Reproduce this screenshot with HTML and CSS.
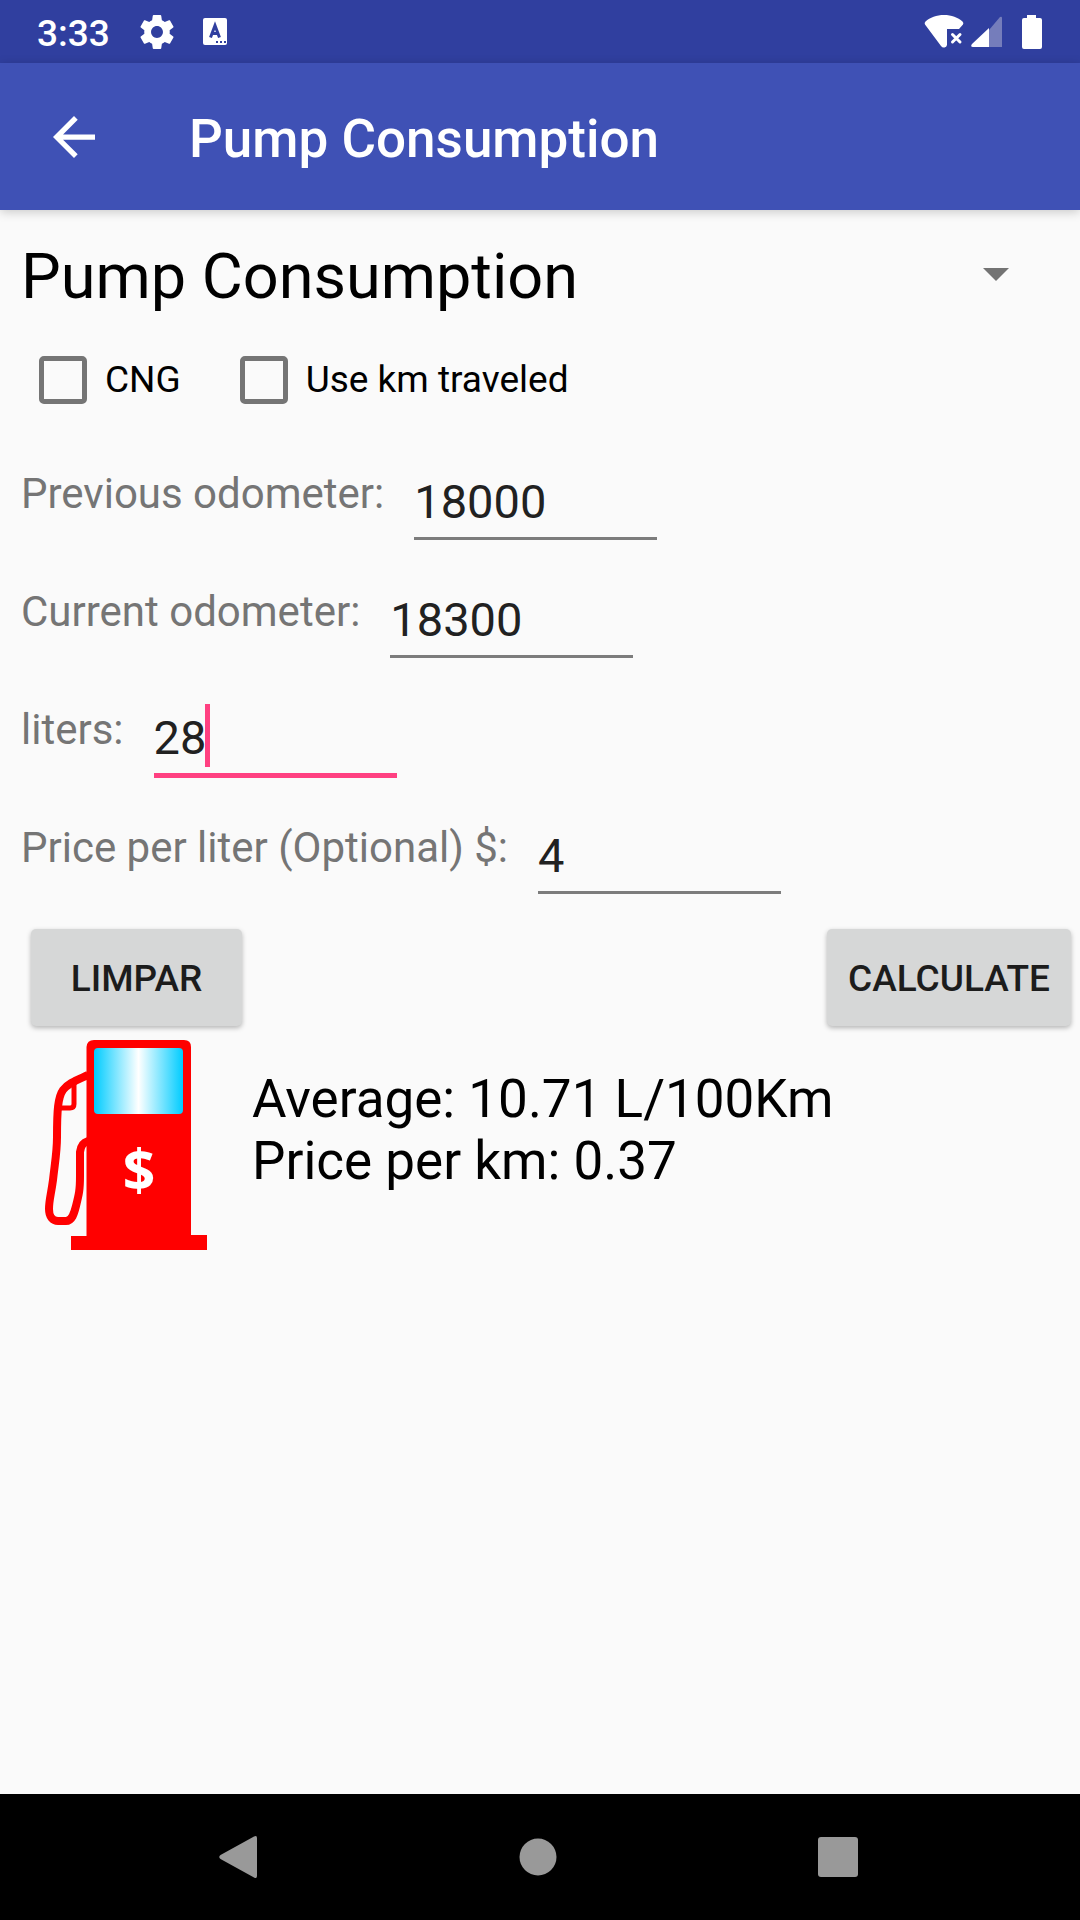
FILE: index.html
```html
<!DOCTYPE html>
<html lang="en">
<head>
<meta charset="utf-8">
<meta name="viewport" content="width=device-width, initial-scale=1">
<title>Pump Consumption</title>
<link rel="stylesheet" href="styles.css">
</head>
<body>
<div class="screen">
  <div class="status-bar">
    <span class="clock">3:33</span>
    <svg class="status-gear" width="34" height="34" viewBox="2 2 20 20" aria-hidden="true"><path fill="#fff" d="M19.43 12.98c.04-.32.07-.64.07-.98s-.03-.66-.07-.98l2.11-1.65c.19-.15.24-.42.12-.64l-2-3.46c-.12-.22-.39-.3-.61-.22l-2.49 1c-.52-.4-1.08-.73-1.69-.98l-.38-2.65C14.46 2.18 14.25 2 14 2h-4c-.25 0-.46.18-.49.42l-.38 2.65c-.61.25-1.17.59-1.69.98l-2.49-1c-.23-.09-.49 0-.61.22l-2 3.46c-.13.22-.07.49.12.64l2.11 1.65c-.04.32-.07.65-.07.98s.03.66.07.98l-2.11 1.65c-.19.15-.24.42-.12.64l2 3.46c.12.22.39.3.61.22l2.49-1c.52.4 1.08.73 1.69.98l.38 2.65c.03.24.24.42.49.42h4c.25 0 .46-.18.49-.42l.38-2.65c.61-.25 1.17-.59 1.69-.98l2.49 1c.23.09.49 0 .61-.22l2-3.46c.12-.22.07-.49-.12-.64l-2.11-1.65zM12 15.5c-1.93 0-3.5-1.57-3.5-3.5s1.57-3.5 3.5-3.5 3.5 1.57 3.5 3.5-1.57 3.5-3.5 3.5z"/></svg>
    <svg width="24" height="27" viewBox="0 0 24 27" aria-hidden="true"><rect width="24" height="27" rx="2" fill="#fff"/><path d="M7.500 19.500L12 7.500L16.500 19.500M9 15.500H15" fill="none" stroke="#303f9f" stroke-width="3"/><path d="M13 23h2v2h-2zM17 23h2v2h-2zM21 23h2v2h-2z" fill="#303f9f"/></svg>
    <div class="status-right">
      <svg width="40" height="33" viewBox="0 0 40 33" aria-hidden="true"><path fill="#fff" d="M1.500 6.500C6 2.500 12.500 0 20 0S34 2.500 38.500 6.500Q40 8 39 9.500L35 14H23V30Q22.500 32 20.500 32.500Q18.500 33 17 31L1 9.500Q0 8 1.500 6.500Z"/><path d="M28.500 19.500L36 27M36 19.500L28.500 27" stroke="#fff" stroke-width="3" stroke-linecap="round"/></svg>
      <svg class="signal" width="32" height="32" viewBox="0 0 32 32" aria-hidden="true"><path fill="#757dbb" d="M18 14L29 1Q31 0 31 2V31H18Z"/><path fill="#fff" d="M18 12V31H2Q-1 31 1 28Z"/></svg>
      <svg width="20" height="34" viewBox="0 0 20 34" aria-hidden="true"><path fill="#fff" d="M5 0H14V3H18Q20 3 20 5V32Q20 34 18 34H2Q0 34 0 32V5Q0 3 2 3H5Z"/></svg>
    </div>
  </div>

  <header class="app-bar">
    <button class="back" type="button" aria-label="Back"><svg width="42" height="42" viewBox="4 4 16 16" aria-hidden="true"><path fill="#fff" d="M20 11H7.830l5.590-5.590L12 4l-8 8 8 8 1.410-1.410L7.830 13H20v-2z"/></svg></button>
    <h1 class="app-title">Pump Consumption</h1>
  </header>

  <main class="content">
    <div class="spinner">
      <select class="spinner-select" aria-label="Calculation"><option>Pump Consumption</option></select>
      <svg class="spinner-arrow" width="26" height="13" viewBox="0 0 26 13" aria-hidden="true"><path fill="#737373" d="M0 0H26L13 13Z"/></svg>
    </div>

    <div class="checks">
      <label class="check"><input class="check-box" type="checkbox">CNG</label>
      <label class="check"><input class="check-box" type="checkbox">Use km traveled</label>
    </div>

    <div class="row">
      <label class="row-label" for="previous">Previous odometer:</label>
      <input class="field" id="previous" type="text" inputmode="numeric" value="18000">
    </div>
    <div class="row">
      <label class="row-label" for="current">Current odometer:</label>
      <input class="field" id="current" type="text" inputmode="numeric" value="18300">
    </div>
    <div class="row">
      <label class="row-label" for="liters">liters:</label>
      <div class="field-active">
        <input class="field" id="liters" type="text" inputmode="decimal" value="28">
        <span class="caret"></span>
      </div>
    </div>
    <div class="row">
      <label class="row-label" for="price">Price per liter (Optional) $:</label>
      <input class="field" id="price" type="text" inputmode="decimal" value="4">
    </div>

    <div class="actions">
      <button class="button" type="button">LIMPAR</button>
      <button class="button" type="button">CALCULATE</button>
    </div>

    <div class="result">
      <svg class="pump" width="162" height="210" viewBox="0 0 162 210" aria-hidden="true">
        <defs><linearGradient id="glass"><stop offset="0" stop-color="#00ccff"/><stop offset=".5" stop-color="#fff"/><stop offset="1" stop-color="#00ccff"/></linearGradient></defs>
        <path fill="#f00" d="M41.500 7Q42 0 49 0H139Q146 0 146 7V195H162V210H26V196H41.500Z"/>
        <rect x="49" y="8" width="89" height="66" rx="4" fill="url(#glass)"/>
        <path fill="none" stroke="#f00" stroke-width="8" d="M43 35C32 40 23 43 18 50C13 57 12 70 12 97C12 112 10 122 8 140C6 155 4 160 4 169C4 177 8 181 13 181H21C27 181 29 174 31 166C34 154 35 150 35 136V112Q36 103 43 101"/>
        <path fill="none" stroke="#f00" stroke-width="5" d="M29 44V64Q29 68 25 68H14"/>
        <text class="pump-sign" x="94" y="151" text-anchor="middle">$</text>
      </svg>
      <p class="result-text">Average: 10.71 L/100Km<br>Price per km: 0.37</p>
    </div>
  </main>

  <nav class="nav-bar">
    <button class="nav-button" type="button" aria-label="Back"><svg width="38" height="42" viewBox="0 0 38 42" aria-hidden="true"><path fill="#999" d="M35 .5Q38-1 38 2V40Q38 43 35 41.500L1.500 23Q-1 21 1.500 19Z"/></svg></button>
    <button class="nav-button" type="button" aria-label="Home"><svg width="38" height="38" viewBox="0 0 38 38" aria-hidden="true"><circle cx="19" cy="19" r="18.500" fill="#999"/></svg></button>
    <button class="nav-button" type="button" aria-label="Recent apps"><svg width="40" height="40" viewBox="0 0 40 40" aria-hidden="true"><rect width="40" height="40" rx="3" fill="#999"/></svg></button>
  </nav>
</div>
</body>
</html>
```
FILE: styles.css
```css
* {
  box-sizing: border-box;
}

body {
  margin: 0;
  background: #fafafa;
  color: #000;
  font-family: Roboto, "Liberation Sans", sans-serif;
}

button,
input,
select {
  margin: 0;
  padding: 0;
  border: 0;
  border-radius: 0;
  outline: 0;
  background: none;
  color: inherit;
  font-family: inherit;
  appearance: none;
}

svg {
  display: block;
  flex: none;
}

.screen {
  display: flex;
  flex-direction: column;
  min-height: 100vh;
}

.status-bar {
  display: flex;
  align-items: center;
  height: 63px;
  padding: 0 38px 0 37px;
  background: #303f9f;
  color: #fff;
}

.clock {
  font-size: 37px;
  font-weight: 500;
  line-height: 44px;
  padding-top: 4px;
}

.status-gear {
  margin: 0 29px 0 30px;
}

.status-right {
  display: flex;
  align-items: center;
  margin-left: auto;
}

.signal {
  margin: 0 19px 0 7px;
}

.app-bar {
  display: flex;
  align-items: center;
  height: 147px;
  padding-left: 53px;
  background: #3f51b5;
  box-shadow: 0 2px 10px rgba(0, 0, 0, 0.2);
  color: #fff;
}

.back {
  margin-right: 94px;
}

.app-title {
  margin: 0;
  padding-top: 4px;
  font-size: 53px;
  font-weight: 500;
  line-height: 62px;
}

.content {
  flex: 1;
}

.spinner {
  position: relative;
  height: 130px;
}

.spinner-select {
  width: 100%;
  height: 132px;
  padding: 0 96px 0 21px;
  font-size: 63px;
}

.spinner-arrow {
  position: absolute;
  top: 58px;
  right: 71px;
  pointer-events: none;
}

.checks {
  display: flex;
  gap: 59px;
  height: 79px;
  padding-left: 39px;
}

.check {
  display: flex;
  align-items: center;
  gap: 18px;
  font-size: 37px;
}

.check-box {
  width: 48px;
  height: 48px;
  border: 5px solid #757575;
  border-radius: 5px;
}

.checks + .row {
  margin-top: 14px;
}

.row {
  display: flex;
  align-items: flex-start;
  gap: 30px;
  height: 118px;
  padding: 32px 21px 0;
}

.row-label {
  color: #757575;
  font-size: 42px;
  line-height: 58px;
}

.field {
  display: block;
  width: 243px;
  height: 75px;
  border-bottom: 3px solid #7c7c7c;
  color: #212121;
  font-size: 47px;
}

.field-active {
  position: relative;
}

.field-active .field {
  height: 77px;
  border-bottom: 5px solid #ff4081;
}

.caret {
  position: absolute;
  top: 3px;
  left: 51px;
  width: 5px;
  height: 63px;
  background: #ff4081;
}

.actions {
  display: flex;
  justify-content: space-between;
  margin-top: 24px;
  padding: 0 9px 0 31px;
}

.button {
  min-width: 211px;
  height: 97px;
  padding: 2px 21px 0;
  border-radius: 5px;
  background: #d6d7d7;
  box-shadow: 0 2px 5px rgba(0, 0, 0, 0.28);
  color: #1c1c1c;
  font-size: 37px;
  font-weight: 500;
}

.result {
  display: flex;
  align-items: flex-start;
  gap: 45px;
  padding: 14px 20px 14px 45px;
}

.pump-sign {
  fill: #fff;
  font-family: "Open Sans", sans-serif;
  font-size: 57px;
  font-weight: 700;
}

.result-text {
  margin: 0;
  padding-top: 28px;
  font-size: 53px;
  line-height: 62px;
}

.nav-bar {
  display: flex;
  align-items: center;
  justify-content: space-between;
  height: 126px;
  padding: 0 202px 0 198px;
  background: #000;
}

.nav-button {
  display: flex;
  justify-content: center;
  width: 80px;
}
```
